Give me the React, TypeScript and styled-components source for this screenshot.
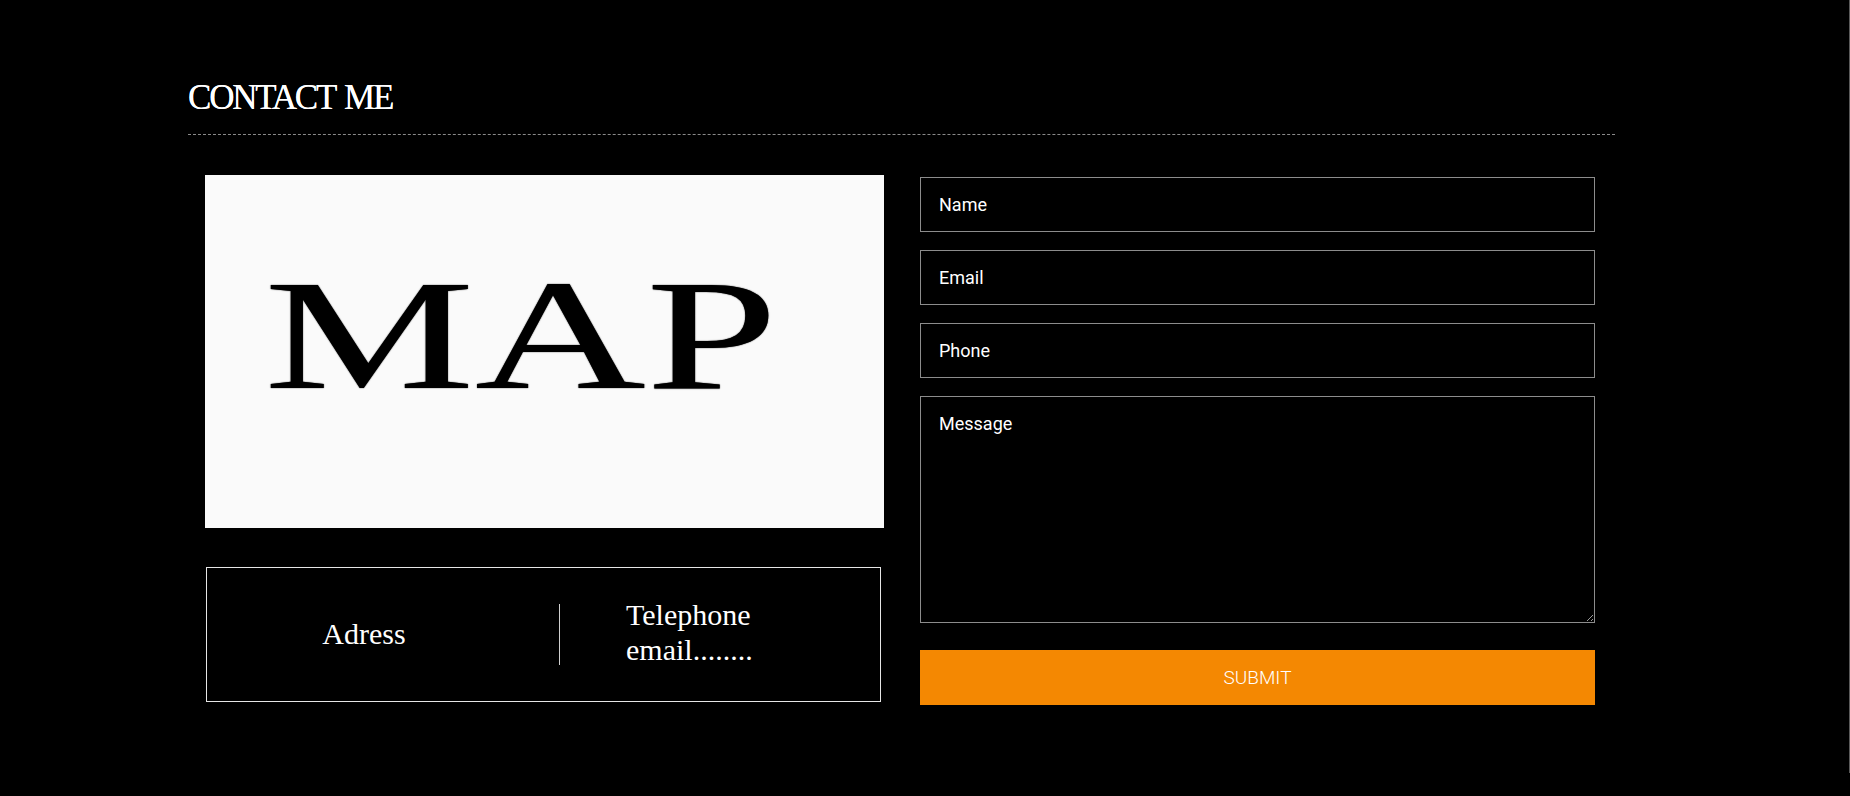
import React from "react";
import styled, { createGlobalStyle } from "styled-components";

const GlobalStyle = createGlobalStyle`
  html, body {
    margin: 0;
    padding: 0;
    background: #000;
  }
  * { box-sizing: border-box; }
`;

const Page = styled.div`
  width: 1850px;
  min-height: 796px;
  background: #000;
  position: relative;
`;

const EdgeLine = styled.div`
  position: absolute;
  top: 0;
  right: 0;
  width: 1px;
  height: 773px;
  background: #5a5a5a;
`;

const Section = styled.section`
  width: 1615px;
  padding: 78px 0 0 188px;
`;

const Header = styled.div`
  padding-bottom: 16px;
  border-bottom: 1px dashed #8a8a8a;
`;

const Title = styled.h2`
  margin: 0;
  font-family: "Liberation Serif", "Times New Roman", serif;
  font-weight: 400;
  font-size: 35px;
  line-height: 40px;
  letter-spacing: -2.2px;
  word-spacing: 3px;
  color: #fff;
  text-shadow: 0 0 0.5px #fff;
`;

const Content = styled.div`
  display: grid;
  grid-template-columns: 679px 675px;
  column-gap: 36px;
  padding: 40px 20px 0 17px;
`;

const LeftColumn = styled.div`
  display: flex;
  flex-direction: column;
  gap: 39px;
`;

const MapBox = styled.div`
  width: 679px;
  height: 353px;
  background: #fafafa;
  overflow: hidden;
  padding: 82px 0 0 59px;
`;

const MapText = styled.div`
  font-family: "Liberation Serif", "Times New Roman", serif;
  font-size: 157px;
  line-height: 1;
  color: #000;
  transform: scaleX(1.51);
  transform-origin: left top;
  white-space: nowrap;
  text-shadow: 0 0 1px #000;
`;

const InfoBox = styled.div`
  margin-left: 1px;
  width: 675px;
  height: 135px;
  border: 1px solid #e6e6e6;
  display: flex;
  align-items: center;
  font-family: "Liberation Serif", "Times New Roman", serif;
  color: #fff;
`;

const InfoCell = styled.div<{ $left?: boolean }>`
  width: ${(p) => (p.$left ? "352px" : "auto")};
  padding: ${(p) => (p.$left ? "0 38px 0 0" : "0 0 0 66px")};
  text-align: ${(p) => (p.$left ? "center" : "left")};
  font-size: 30px;
  line-height: 35px;
  margin-top: ${(p) => (p.$left ? "-3px" : "-5px")};
`;

const Divider = styled.div`
  width: 1px;
  height: 61px;
  background: #d0d0d0;
`;

const Form = styled.form`
  display: flex;
  flex-direction: column;
  gap: 18px;
  padding-top: 2px;
`;

const fieldStyles = `
  width: 675px;
  background: #000;
  border: 1px solid #8c8c8c;
  color: #fff;
  font-family: Roboto, "Liberation Sans", sans-serif;
  font-size: 18px;
  outline: none;
  margin: 0;
  &::placeholder { color: #fff; opacity: 1; }
`;

const Field = styled.input`
  ${fieldStyles}
  height: 55px;
  padding: 0 18px;
`;

const MessageField = styled.textarea`
  ${fieldStyles}
  display: block;
  height: 227px;
  padding: 15px 18px;
  line-height: 24px;
  resize: both;
`;

const SubmitButton = styled.button`
  margin-top: 9px;
  width: 675px;
  height: 55px;
  border: none;
  background: #f48802;
  color: #fff;
  font-family: Roboto, "Liberation Sans", sans-serif;
  font-weight: 300;
  font-size: 19px;
  text-transform: uppercase;
  cursor: pointer;
`;

export default function App() {
  return (
    <>
      <GlobalStyle />
      <Page>
        <Section>
          <Header>
            <Title>CONTACT ME</Title>
          </Header>
          <Content>
            <LeftColumn>
              <MapBox>
                <MapText>MAP</MapText>
              </MapBox>
              <InfoBox>
                <InfoCell $left>Adress</InfoCell>
                <Divider />
                <InfoCell>
                  Telephone
                  <br />
                  email........
                </InfoCell>
              </InfoBox>
            </LeftColumn>
            <Form onSubmit={(e) => e.preventDefault()}>
              <Field type="text" placeholder="Name" />
              <Field type="email" placeholder="Email" />
              <Field type="tel" placeholder="Phone" />
              <MessageField placeholder="Message" />
              <SubmitButton type="submit">Submit</SubmitButton>
            </Form>
          </Content>
        </Section>
        <EdgeLine />
      </Page>
    </>
  );
}
